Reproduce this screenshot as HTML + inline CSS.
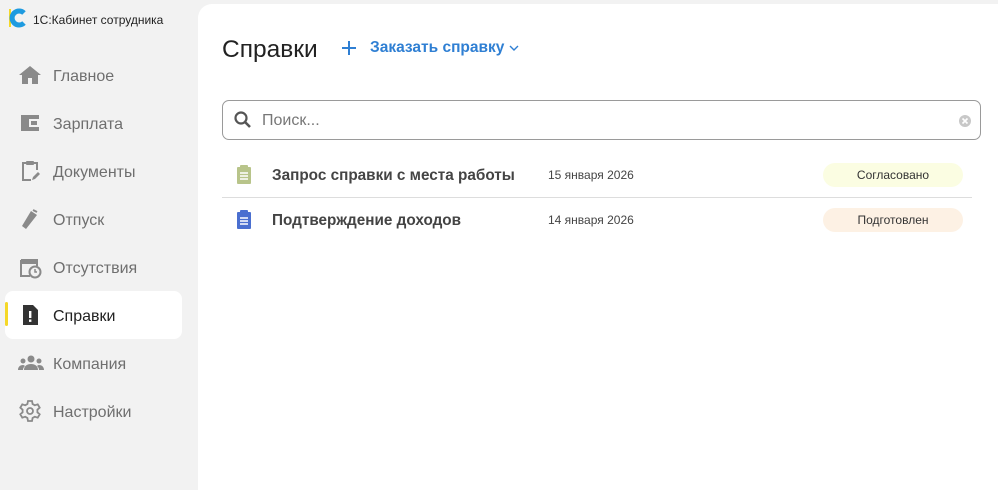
<!DOCTYPE html>
<html><head><meta charset="utf-8">
<style>
*{margin:0;padding:0;box-sizing:border-box}
body{width:998px;height:490px;background:#f2f2f2;font-family:"Liberation Sans",Roboto,sans-serif;position:relative;overflow:hidden}
.logo{position:absolute;left:9px;top:8px}
.brand{position:absolute;left:33px;top:13px;font-size:12px;color:#222}
.nav{position:absolute;left:0;top:0}
.item{position:absolute;left:5px;width:177px;height:48px;display:flex;align-items:center;font-size:16px;color:#6f6f6f}
.item span{position:absolute;left:48px;top:17px}
.item svg{position:absolute;left:13px}
.item.active{background:#fff;border-radius:8px;color:#222}
.item.active:before{content:"";position:absolute;left:0;top:11px;width:3px;height:24px;background:#f5d828;border-radius:2px}
.main{position:absolute;left:198px;top:4px;width:800px;height:486px;background:#fff;border-top-left-radius:14px}
h1{position:absolute;left:24px;top:32px;font-size:24.5px;font-weight:normal;color:#222}
.order{position:absolute;left:143px;top:35px;color:#2f7fd3;font-size:15.5px;font-weight:bold;display:flex;align-items:center}
.search{position:absolute;left:24px;top:96px;width:759px;height:40px;border:1px solid #9a9a9a;border-radius:7px}
.search .ph{position:absolute;left:39px;top:11px;font-size:16px;color:#777}
.row{position:absolute;left:24px;width:750px;height:44px}
.row .t{position:absolute;left:50px;top:15px;font-size:15.3px;font-weight:bold;color:#444}
.row .d{position:absolute;left:326px;top:16px;font-size:12px;color:#444}
.row .p{position:absolute;left:601px;top:11px;width:140px;height:24px;border-radius:12px;font-size:12px;color:#333;text-align:center;line-height:24px}
.row svg{position:absolute;left:14px;top:13px}
</style></head><body>
<svg class="logo" width="18" height="20" viewBox="0 0 18 20"><rect x="0" y="1" width="2" height="18" fill="#f5d828"/><path d="M15 5 A7 7 0 1 0 15 15" fill="none" stroke="#1e9be0" stroke-width="5"/></svg>
<div class="brand">1С:Кабинет сотрудника</div>
<div class="nav">
<div class="item" style="top:51px"><svg width="24" height="24" viewBox="0 0 24 24"><path d="M12 3L1 12h3v9h6v-6h4v6h6v-9h3z" fill="#8a8a8a"/></svg><span>Главное</span></div>
<div class="item" style="top:99px"><svg width="24" height="24" viewBox="0 0 24 24"><path d="M3 4h18v16H3z" fill="#8a8a8a"/><rect x="11" y="8" width="10" height="8" fill="#f2f2f2"/><rect x="13" y="10" width="6" height="4" fill="#8a8a8a"/></svg><span>Зарплата</span></div>
<div class="item" style="top:147px"><svg width="24" height="24" viewBox="0 0 24 24"><path d="M9 4H5v17h8M15 4h4v7" fill="none" stroke="#8a8a8a" stroke-width="2"/><rect x="8" y="2" width="8" height="4" rx="1" fill="#8a8a8a"/><path d="M14 21l1-3 5-5 2 2-5 5z" fill="#8a8a8a"/></svg><span>Документы</span></div>
<div class="item" style="top:195px"><svg width="24" height="24" viewBox="0 0 24 24"><path d="M8 22l-4-3 9-15 6 4z" fill="#8a8a8a"/><path d="M15 3l4 2" stroke="#8a8a8a" stroke-width="2"/></svg><span>Отпуск</span></div>
<div class="item" style="top:243px"><svg width="24" height="24" viewBox="0 0 24 24"><path d="M3 5h16v6M3 5v16h9" fill="none" stroke="#8a8a8a" stroke-width="2"/><rect x="3" y="5" width="16" height="4" fill="#8a8a8a"/><circle cx="17" cy="17" r="5.5" fill="none" stroke="#8a8a8a" stroke-width="2"/><path d="M17 14v3h2" fill="none" stroke="#8a8a8a" stroke-width="1.5"/></svg><span>Отсутствия</span></div>
<div class="item active" style="top:291px"><svg width="24" height="24" viewBox="0 0 24 24"><path d="M5 2h10l5 5v15H5z" fill="#333"/><rect x="11" y="8" width="2.4" height="7" fill="#fff"/><rect x="11" y="16.5" width="2.4" height="2.4" fill="#fff"/></svg><span>Справки</span></div>
<div class="item" style="top:339px"><svg width="26" height="24" viewBox="0 0 26 24"><circle cx="13" cy="8" r="3.5" fill="#8a8a8a"/><circle cx="5" cy="10" r="2.5" fill="#8a8a8a"/><circle cx="21" cy="10" r="2.5" fill="#8a8a8a"/><path d="M6 19c0-4 3-6 7-6s7 2 7 6zM0 19c0-3 2-5 5-5 1 0 2 1 2 1-1 1-2 2-2 4zM26 19c0-3-2-5-5-5-1 0-2 1-2 1 1 1 2 2 2 4z" fill="#8a8a8a"/></svg><span>Компания</span></div>
<div class="item" style="top:387px"><svg width="24" height="24" viewBox="0 0 24 24"><circle cx="12" cy="12" r="3" fill="none" stroke="#8a8a8a" stroke-width="1.8"/><path d="M10 2h4l.6 3 2.2 1.3 2.9-1 2 3.4-2.3 2 0 2.6 2.3 2-2 3.4-2.9-1-2.2 1.3-.6 3h-4l-.6-3-2.2-1.3-2.9 1-2-3.4 2.3-2v-2.6l-2.3-2 2-3.4 2.9 1L9.4 5z" fill="none" stroke="#8a8a8a" stroke-width="1.8"/></svg><span>Настройки</span></div>
</div>
<div class="main">
<h1>Справки</h1>
<div class="order"><svg width="16" height="16" viewBox="0 0 16 16" style="margin-right:13px"><path d="M8 1v14M1 8h14" stroke="#2f7fd3" stroke-width="2"/></svg>Заказать справку<svg width="12" height="8" viewBox="0 0 12 8" style="margin-left:4px"><path d="M2 2l4 4 4-4" fill="none" stroke="#2f7fd3" stroke-width="1.4"/></svg></div>
<div class="search"><svg width="20" height="20" viewBox="0 0 20 20" style="position:absolute;left:10px;top:9px"><circle cx="8" cy="8" r="5.5" fill="none" stroke="#555" stroke-width="2.2"/><path d="M12 12l5 5" stroke="#555" stroke-width="2.6"/></svg><div class="ph">Поиск...</div><svg width="14" height="14" viewBox="0 0 14 14" style="position:absolute;left:735px;top:13px"><circle cx="7" cy="7" r="6" fill="#c8c8c8"/><path d="M4.5 4.5l5 5M9.5 4.5l-5 5" stroke="#fff" stroke-width="1.6"/></svg></div>
<div class="row" style="top:148px;border-bottom:1px solid #ddd;height:46px"><svg width="16" height="20" viewBox="0 0 16 20"><rect x="1" y="2" width="14" height="17" rx="1" fill="#b8c48a"/><rect x="4" y="0" width="8" height="4" rx="1" fill="#b8c48a"/><path d="M4 8h8M4 11h8M4 14h8" stroke="#fff" stroke-width="1.4"/></svg><div class="t">Запрос справки с места работы</div><div class="d">15 января 2026</div><div class="p" style="background:#fbfde2">Согласовано</div></div>
<div class="row" style="top:193px"><svg width="16" height="20" viewBox="0 0 16 20"><rect x="1" y="2" width="14" height="17" rx="1" fill="#4a6fd0"/><rect x="4" y="0" width="8" height="4" rx="1" fill="#4a6fd0"/><path d="M4 8h8M4 11h8M4 14h8" stroke="#fff" stroke-width="1.4"/></svg><div class="t">Подтверждение доходов</div><div class="d">14 января 2026</div><div class="p" style="background:#fdf1e4">Подготовлен</div></div>
</div>
</body></html>
